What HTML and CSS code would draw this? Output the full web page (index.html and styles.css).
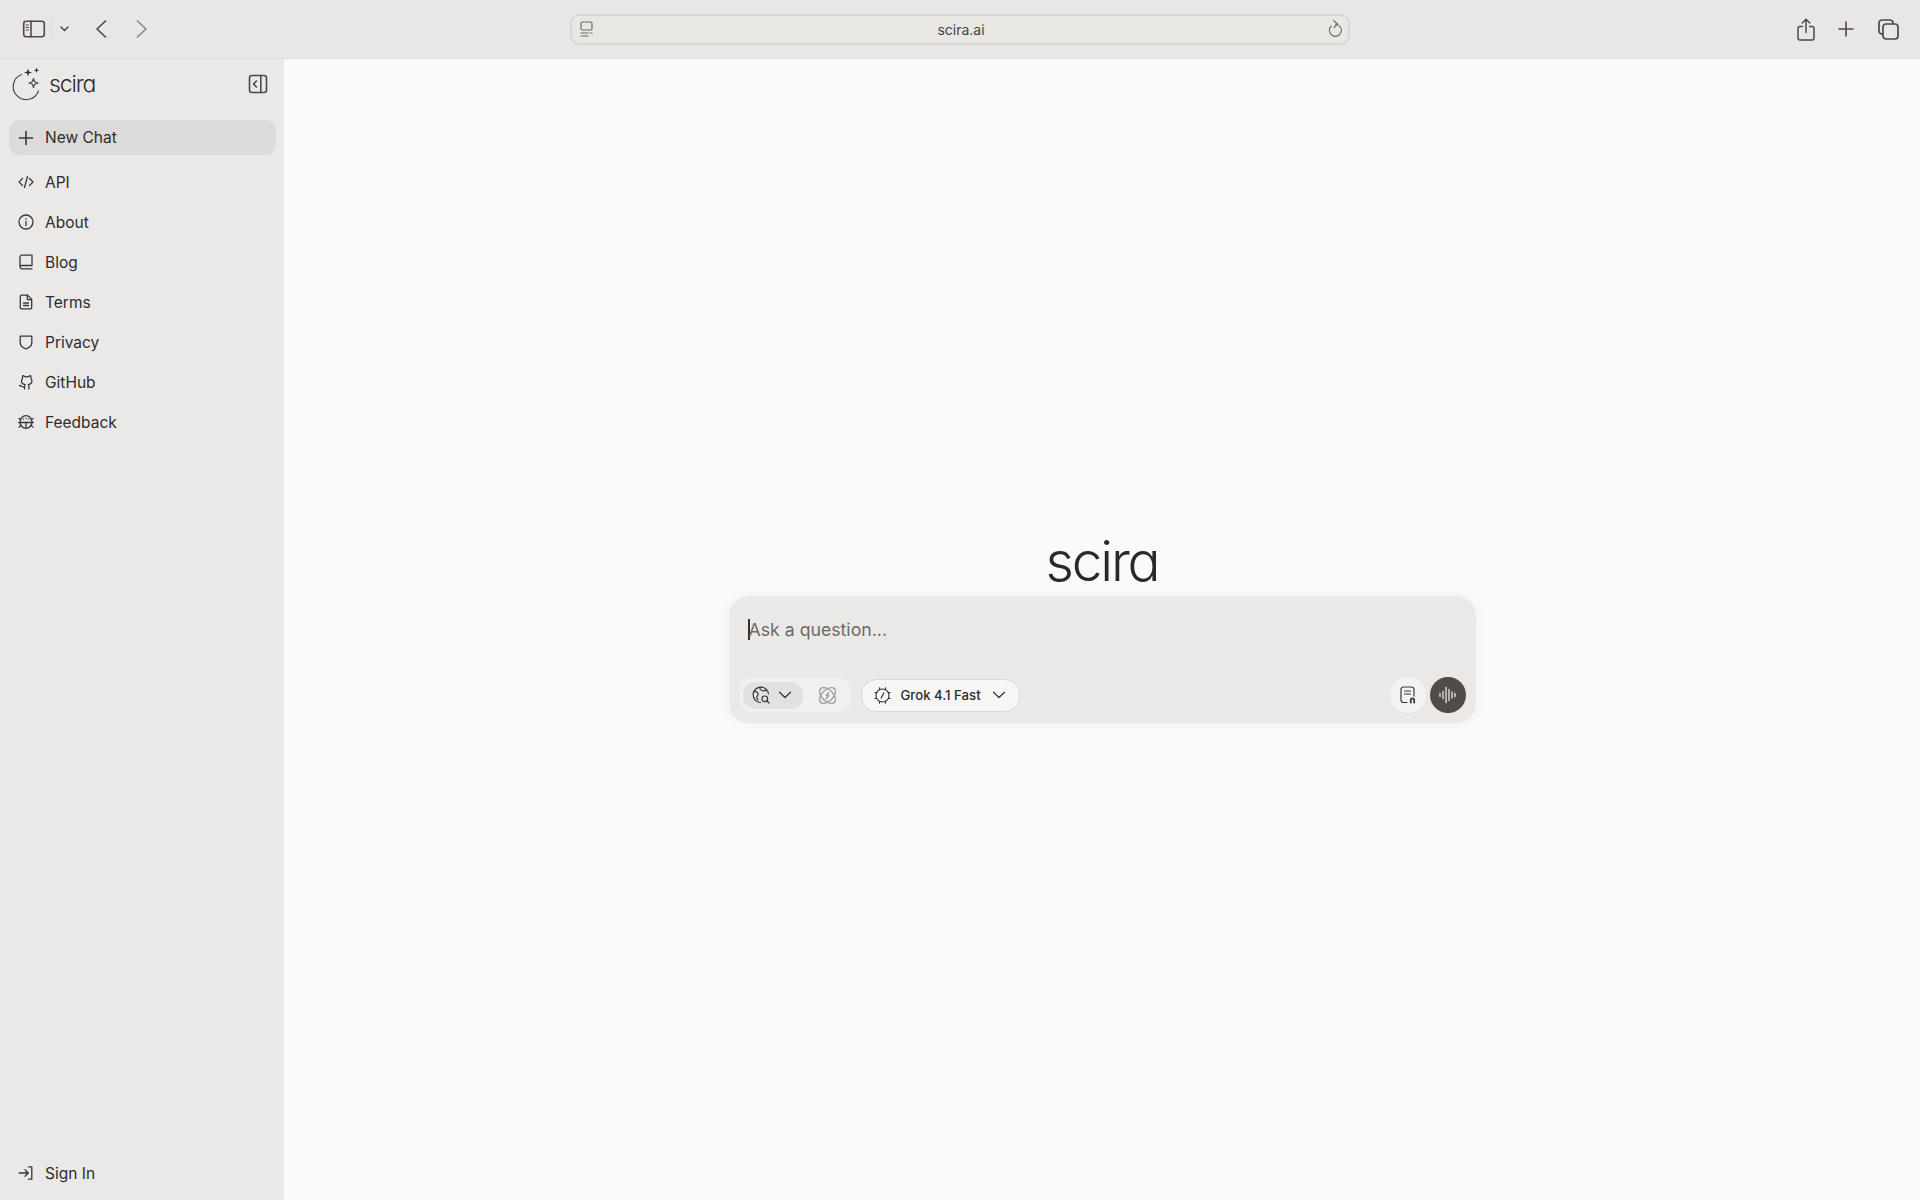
FILE: index.html
```html
<html>

<head>
  <link rel="stylesheet" href="styles.css">
</head>

<body>
  <div class="chrome">
    <div class="chrome-left">
      <svg class="ic-side" width="24" height="18" viewBox="0 0 24 18"><rect x="1.700" y="1.200" width="20.600" height="15.600" rx="2.500"/><path d="M9 1.200v15.600"/><path class="thin" d="M4 5h2.500M4 7.500h2.500M4 10h2.500"/></svg>
      <span class="chrome-sep"></span>
      <svg class="ic-caret" width="9" height="6" viewBox="0 0 9 6"><path d="M1 1l3.500 3.500L8 1"/></svg>
      <svg class="ic-back" width="12" height="18" viewBox="0 0 12 18"><path d="M10.500 1L2 9l8.500 8"/></svg>
      <svg class="ic-forward" width="12" height="18" viewBox="0 0 12 18"><path d="M1.500 1L10 9l-8.500 8"/></svg>
    </div>
    <div class="urlbar">
      <svg class="ic-tabs" width="14" height="16" viewBox="0 0 14 16"><rect x="1" y="1" width="11" height="8" rx="1.500"/><path d="M1 12h7M1 15h7M10 12h2"/></svg>
      <span class="url">scira.ai</span>
      <svg class="ic-reload" width="14" height="20" viewBox="0 0 14 20"><path d="M3.200 7A6 6 0 1 0 7.500 5.300"/><path d="M5.500 1.500L9.500 5 6 8.500"/></svg>
    </div>
    <div class="chrome-right">
      <svg class="ic-share" width="18" height="23" viewBox="0 0 18 23"><path d="M5.500 8.500H3a2 2 0 0 0-2 2V20a2 2 0 0 0 2 2h12a2 2 0 0 0 2-2v-9.500a2 2 0 0 0-2-2h-2.500"/><path d="M9 14.500V1.500M5.200 5L9 1.300 12.800 5"/></svg>
      <svg class="ic-plus" width="16" height="16" viewBox="0 0 16 16"><path d="M8 1v14M1 8h14"/></svg>
      <svg class="ic-copy" width="21" height="21" viewBox="0 0 21 21"><path d="M4.500 15H4a3 3 0 0 1-3-3V4a3 3 0 0 1 3-3h8a3 3 0 0 1 3 3v.5"/><rect x="5" y="5" width="15" height="15" rx="3"/></svg>
    </div>
  </div>

  <div class="wrapper">
    <div class="sidebar">
      <div class="brand">
        <svg class="logo" width="34" height="34" viewBox="0 0 34 34">
          <path class="logo-line" d="M10.500 7.500A13 13 0 1 0 27.500 24"/>
          <path class="logo-fill" d="M17 1.500l1 3 3 1-3 1-1 3-1-3-3-1 3-1zM25.500 0.500l.7 2 2 .7-2 .7-.7 2-.7-2-2-.7 2-.7z"/>
          <path class="logo-line" d="M22.500 11.500l1.200 3.300 3.300 1.200-3.300 1.200-1.200 3.300-1.200-3.300-3.300-1.200 3.300-1.200z"/>
        </svg>
        <span class="brand-name">scira</span>
        <svg class="collapse" width="20" height="20" viewBox="0 0 20 20"><rect x="1.500" y="1.500" width="17" height="17" rx="2.500"/><path d="M12.800 1.500v17M8.500 7L5.500 10l3 3"/></svg>
      </div>

      <div class="new-chat">
        <svg class="nav-icon plus" viewBox="0 0 16 16"><path d="M8 1.500v13M1.500 8h13"/></svg>
        <span>New Chat</span>
      </div>

      <div class="nav">
        <div class="nav-item">
          <svg class="nav-icon" viewBox="0 0 16 16"><path d="M4.500 4.500L1 8l3.500 3.500M11.500 4.500L15 8l-3.500 3.500M9.500 2.500l-3 11"/></svg>
          <span>API</span>
        </div>
        <div class="nav-item">
          <svg class="nav-icon" viewBox="0 0 16 16"><circle cx="8" cy="8" r="7"/><path d="M8 7.500v4M8 4.700v.3"/></svg>
          <span>About</span>
        </div>
        <div class="nav-item">
          <svg class="nav-icon" viewBox="0 0 16 16"><path d="M2 13V3a1.800 1.800 0 0 1 1.800-1.800H14v10.300H3.800A1.800 1.800 0 0 0 2 13a1.800 1.800 0 0 0 1.800 1.800H14"/></svg>
          <span>Blog</span>
        </div>
        <div class="nav-item">
          <svg class="nav-icon" viewBox="0 0 16 16"><path d="M9.500 1.200H3.300a1 1 0 0 0-1 1v11.600a1 1 0 0 0 1 1h9.400a1 1 0 0 0 1-1V5.400z"/><path d="M9.300 1.400v4.200h4.200M5.500 9h5M5.500 11.500h5"/></svg>
          <span>Terms</span>
        </div>
        <div class="nav-item">
          <svg class="nav-icon" viewBox="0 0 16 16"><path d="M2.200 2.200h11.600v6.500c0 3.200-2.800 5.200-5.800 6.200-3-1-5.800-3-5.800-6.200z"/></svg>
          <span>Privacy</span>
        </div>
        <div class="nav-item">
          <svg class="nav-icon" viewBox="0 0 16 16"><path d="M6.500 15v-2.500c0-.9.300-1.500.7-1.900-2.200-.3-3.700-1.300-3.700-3.600 0-1 .4-1.800 1-2.400-.1-.6-.1-1.700.2-2.900 0 0 1 0 2.400 1.100a7 7 0 0 1 3.200 0C11.700 1.700 12.700 1.700 12.700 1.700c.3 1.200.3 2.300.2 2.900.6.600 1 1.400 1 2.400 0 2.300-1.500 3.300-3.700 3.600.4.400.7 1 .7 1.900V15"/><path d="M6.500 12.800c-2.500.8-3-.8-5-1.300"/></svg>
          <span>GitHub</span>
        </div>
        <div class="nav-item">
          <svg class="nav-icon" viewBox="0 0 16 16"><ellipse cx="8" cy="8" rx="6" ry="6.300"/><path d="M.8 8.500h14.400M8 8.500v5.500M1 4.500l2 1.200M15 4.500l-2 1.200M1 13l2-1.500M15 13l-2-1.500M5.500 5h.01M8 4.500h.01M10.500 5h.01"/></svg>
          <span>Feedback</span>
        </div>
      </div>

      <div class="nav-item signin">
        <svg class="nav-icon" viewBox="0 0 16 16"><path d="M10.500 1.800h3.300v12.400h-3.300M1.200 8h9M7 4.800L10.300 8 7 11.200"/></svg>
        <span>Sign In</span>
      </div>
    </div>

    <div class="content">
      <h1 class="title">scira</h1>
      <div class="prompt">
        <div class="prompt-text"><span class="caret"></span>Ask a question...</div>
        <div class="prompt-bar">
          <div class="mode-group">
            <div class="mode-active">
              <svg class="tool-icon" width="18" height="18" viewBox="0 0 18 18"><path d="M8.500 16.500A7.700 7.700 0 1 1 16.500 8"/><path d="M2 5.500c2.500-.5 3.500.5 4 2 .4 1.500-.5 2-1 3s0 2.500 1 3M8 1.200c-.5 2 .5 2.800 2 3.300s3.500.5 4.800-.5"/><circle cx="12.800" cy="12.800" r="2.800"/><path d="M15 15l2 2"/></svg>
              <svg class="chev" width="14" height="8" viewBox="0 0 14 8"><path d="M1.500 1.200L7 6.500l5.500-5.300"/></svg>
            </div>
            <svg class="tool-icon faded" width="17" height="17" viewBox="1.500 1.500 14 14"><ellipse cx="8.500" cy="8.500" rx="8" ry="4.600" transform="rotate(45 8.500 8.500)"/><ellipse cx="8.500" cy="8.500" rx="8" ry="4.600" transform="rotate(-45 8.500 8.500)"/><path d="M9.500 6L7.500 8.500h2L7.500 11"/></svg>
          </div>
          <div class="model-pill">
            <svg class="tool-icon" width="17" height="17" viewBox="0 0 17 17"><circle cx="8.500" cy="8.500" r="6.500"/><path d="M9.800 6L7.200 11M5.500 0.800v1.500M11.500 0.800v1.500M5.500 14.700v1.500M11.500 14.700v1.500M.8 5.500h1.500M.8 11.500h1.500M14.700 5.500h1.500M14.700 11.500h1.500"/></svg>
            <span class="model-name">Grok 4.1 Fast</span>
            <svg class="chev" width="14" height="8" viewBox="0 0 14 8"><path d="M1.500 1.200L7 6.500l5.500-5.300"/></svg>
          </div>
          <div class="bar-right">
            <div class="round-btn attach">
              <svg class="tool-icon" width="16" height="18" viewBox="0 0 16 18"><path d="M7 16.500H3.500a2.500 2.500 0 0 1-2.500-2.500V3.500A2.500 2.500 0 0 1 3.500 1h8A2.500 2.500 0 0 1 14 3.500V10"/><path d="M4.500 5h6M4.500 8h6"/><path d="M10.800 16.500v-2.500a1.700 1.700 0 0 1 3.400 0v2.500" stroke-width="1.800"/></svg>
            </div>
            <div class="round-btn voice">
              <svg width="18" height="18" viewBox="0 0 18 18"><path d="M1 7.500v3M4 5.500v7M7 1.500v15M10 3.500v11M13 6v6M16 7.500v3"/></svg>
            </div>
          </div>
        </div>
      </div>
    </div>
  </div>
</body>

</html>
```

FILE: styles.css
```css
html,
body {
  margin: 0;
  height: 100%;
  overflow: hidden;
}

body {
  display: flex;
  flex-direction: column;
  font-family: "Inter", "Liberation Sans", sans-serif;
  background: #fafafa;
  color: #2f2c2a;
}

svg {
  fill: none;
  stroke: #4f4a47;
  stroke-width: 1.5;
  stroke-linecap: round;
  stroke-linejoin: round;
  flex: none;
}

/* browser toolbar */
.chrome {
  height: 58px;
  flex: none;
  display: flex;
  align-items: center;
  background: #e8e7e5;
  border-bottom: 1px solid #dfdedc;
}

.chrome-left {
  width: 570px;
  display: flex;
  align-items: center;
  padding-left: 22px;
  box-sizing: border-box;
}

.ic-side {
  stroke-width: 1.6;
}

.ic-side .thin {
  stroke-width: 1;
}

.chrome-sep {
  width: 1px;
  height: 18px;
  margin-left: 5px;
  background: #dcdbd9;
}

.ic-caret {
  margin-left: 8px;
}

.ic-back {
  margin-left: 26px;
  stroke-width: 1.7;
}

.ic-forward {
  margin-left: 29px;
  stroke: #8b8886;
  stroke-width: 1.7;
}

.urlbar {
  width: 780px;
  height: 31px;
  box-sizing: border-box;
  display: flex;
  align-items: center;
  justify-content: space-between;
  padding: 0 6px 0 8px;
  background: #e8e7e4;
  border: 2px solid #d9d8d6;
  border-radius: 9px;
}

.ic-tabs {
  stroke: #6d6a68;
  stroke-width: 1.2;
}

.ic-reload {
  stroke: #6d6a68;
  stroke-width: 1.1;
}

.url {
  font-size: 14px;
  color: #45423f;
}

.chrome-right {
  flex: 1;
  display: flex;
  align-items: center;
  justify-content: flex-end;
  padding-right: 21px;
}

.ic-plus {
  margin-left: 23px;
  stroke-width: 1.6;
}

.ic-copy {
  margin-left: 24px;
  stroke-width: 1.7;
}

.wrapper {
  flex: 1;
  display: flex;
  min-height: 0;
}

/* sidebar */
.sidebar {
  width: 284px;
  flex: none;
  box-sizing: border-box;
  display: flex;
  flex-direction: column;
  background: #eae9e7;
  font-size: 15.5px;
  padding-bottom: 7px;
}

.brand {
  height: 48px;
  margin-top: 1px;
  display: flex;
  align-items: center;
  padding: 0 16px 0 11px;
}

.logo {
  stroke-width: 1.2;
}

.logo-fill {
  fill: #35312f;
  stroke: none;
}

.brand-name {
  margin-left: 4px;
  font-size: 23px;
  font-weight: 300;
  font-feature-settings: "cv11";
  letter-spacing: -1.1px;
  flex: 1;
}

.collapse {
  stroke-width: 1.6;
}

.new-chat {
  height: 35px;
  margin: 12px 8px 0 9px;
  padding-left: 9px;
  display: flex;
  align-items: center;
  gap: 11px;
  background: #dcdbd9;
  border-radius: 10px;
}

.nav {
  margin-top: 7px;
  flex: 1;
}

.nav-item {
  height: 40px;
  display: flex;
  align-items: center;
  gap: 11px;
  padding-left: 18px;
}

.nav-icon {
  width: 16px;
  height: 16px;
  stroke-width: 1.3;
  stroke: #3b3735;
}

.plus {
  stroke-width: 1.6;
}

/* main area */
.content {
  flex: 1;
  display: flex;
  flex-direction: column;
  align-items: center;
  padding-top: 468px;
}

.title {
  margin: 0;
  height: 69px;
  line-height: 69px;
  font-size: 55px;
  font-weight: 300;
  font-feature-settings: "cv11";
  letter-spacing: -2.200px;
  color: #2b2927;
}

.prompt {
  width: 747px;
  height: 127px;
  box-sizing: border-box;
  display: flex;
  flex-direction: column;
  justify-content: space-between;
  padding: 20px 10px 10px 11px;
  background: #eae9e7;
  border-radius: 20px;
  box-shadow: 0 0 14px rgba(60, 55, 50, 0.05);
}

.prompt-text {
  display: flex;
  align-items: center;
  padding-left: 8px;
  font-size: 17.700px;
  color: #6d6a67;
  height: 26px;
}

.caret {
  width: 2px;
  height: 21px;
  margin-right: -1px;
  background: #35312f;
}

.prompt-bar {
  display: flex;
  align-items: center;
  gap: 10px;
}

.tool-icon {
  stroke-width: 1.2;
  stroke: #3b3735;
}

.chev {
  stroke-width: 1.3;
  stroke: #3b3735;
}

.mode-group {
  width: 111px;
  height: 34px;
  box-sizing: border-box;
  display: flex;
  align-items: center;
  gap: 16px;
  padding-left: 3px;
  background: #f1f0ee;
  border-radius: 12px;
}

.mode-active {
  width: 60px;
  height: 27px;
  box-sizing: border-box;
  display: flex;
  align-items: center;
  gap: 8px;
  padding-left: 9px;
  background: #e2e1df;
  border-radius: 12px;
}

.faded {
  stroke: #a5a3a1;
}

.model-pill {
  width: 159px;
  height: 33px;
  box-sizing: border-box;
  display: flex;
  align-items: center;
  padding-left: 12px;
  background: #f7f6f5;
  border: 1px solid #d9d8d6;
  border-radius: 15px;
}

.model-name {
  margin: 0 11px 0 10px;
  font-size: 13.200px;
  font-weight: 500;
  white-space: nowrap;
}

.bar-right {
  margin-left: auto;
  display: flex;
  gap: 4px;
}

.round-btn {
  width: 36px;
  height: 36px;
  display: flex;
  align-items: center;
  justify-content: center;
  border-radius: 50%;
}

.attach {
  background: #f4f3f2;
}

.voice {
  background: #524c49;
}

.voice svg {
  stroke: #e8e7e5;
  stroke-width: 1.3;
}
```
